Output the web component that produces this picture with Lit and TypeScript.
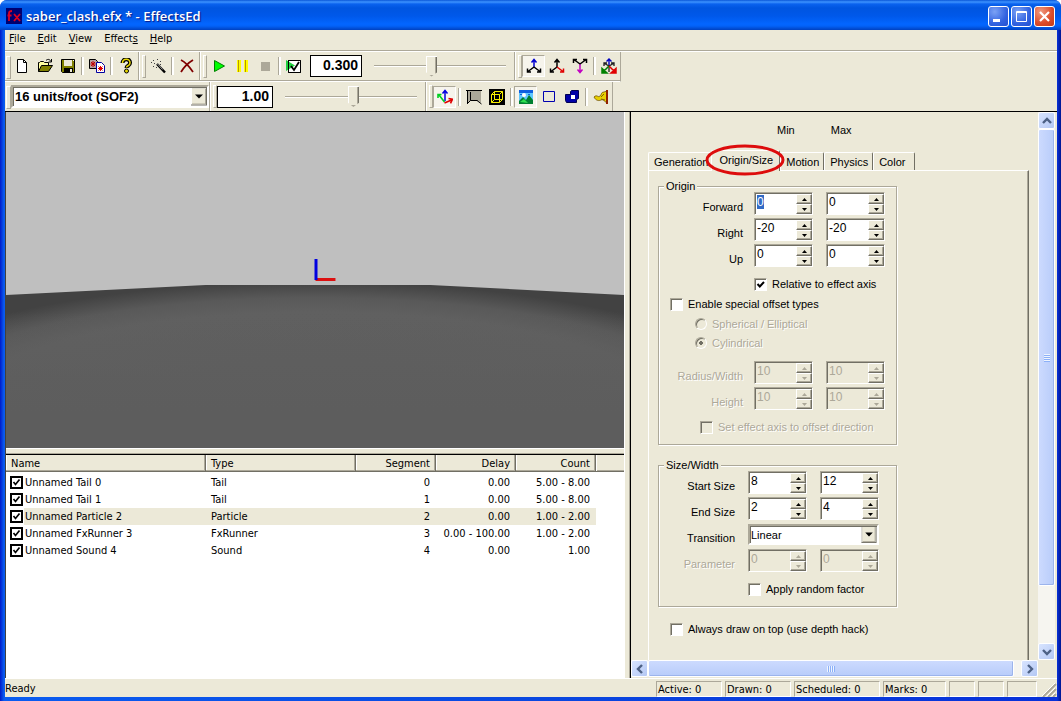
import { LitElement, html, css, svg, nothing } from "lit";
import { customElement, state } from "lit/decorators.js";

const icon = (body: unknown, cls = "ico") =>
  html`<svg class=${cls} viewBox="0 0 16 16" width="16" height="16" aria-hidden="true">${body}</svg>`;

const axisTripod = (up: string, left: string, right: string) => svg`
  <path d="M8 9V2M5.500 4.500 8 1.500l2.500 3" stroke=${up} fill="none" stroke-width="1.500"/>
  <path d="M8 9 2 13.500M1.500 10.500v3.500h3.500" stroke=${left} fill="none" stroke-width="1.500"/>
  <path d="M8 9l6 4.500M14.500 10.500v3.500h-3.500" stroke=${right} fill="none" stroke-width="1.500"/>`;

const ICONS: Record<string, unknown> = {
  new: svg`<path d="M3.500 1.500h6l3 3v10h-9z" fill="#fff" stroke="#000"/><path d="M9.500 1.500v3h3" fill="none" stroke="#000"/>`,
  open: svg`<path d="M1.500 13.500v-9h1l1-1h3l1 1h4v3" fill="#ffffa0" stroke="#000"/><path d="M1.500 13.500l3-6h11l-4 6z" fill="#808000" stroke="#000"/><path d="M9 2.500c2-2 4-1 5 1M14.500 1v3h-3" fill="none" stroke="#000"/>`,
  save: svg`<path d="M1.500 1.500h13v13h-12l-1-1z" fill="#808000" stroke="#000"/><path d="M4 2h8v6H4z" fill="#ece9d8"/><path d="M4 10h9v4H4z" fill="#000"/><path d="M10 11h2v3h-2z" fill="#ece9d8"/><path d="M13 2h1v1h-1z" fill="#fff"/>`,
  copy: svg`<path d="M.5 1.500h6l2 2v7h-8z" fill="#b8a0a0" stroke="#000"/><path d="M2 4l4 4M6 4L2 8M4 3v6M1.500 6h5" stroke="#c00000"/><path d="M7.500 4.500h5l3 3v7h-8z" fill="#fff" stroke="#0000a0"/><path d="M9.500 8.500l4 4M13.500 8.500l-4 4M11.500 8v5M9 10.500h5" stroke="#e00000"/>`,
  help: svg`<path d="M4.500 5c0-5 8-5 7.500 0 0 3-3.500 2.500-3.500 5" fill="none" stroke="#000" stroke-width="4"/><path d="M4.500 5c0-5 8-5 7.500 0 0 3-3.500 2.500-3.500 4.500" fill="none" stroke="#e8d800" stroke-width="1.500"/><circle cx="8.500" cy="13" r="2" fill="#e8d800" stroke="#000"/>`,
  wand: svg`<path d="M7 6l8 8.500" stroke="#000" stroke-width="2.400"/><path d="M7.500 6l5 5.500" stroke="#fff" stroke-width=".6"/><path d="M3 2h1v1H3zM7 1h1v1H7zM10 3h1v1h-1zM1 4h1v1H1zM4 5h1v1H4zM3 8h1v1H3zM6 9h1v1H6zM10 6h1v1h-1z" fill="#404040"/>`,
  del: svg`<path d="M2 2c4 2 8 6 12 12M14 2C9 5 5 9 2 14" fill="none" stroke="#800000" stroke-width="1.800"/>`,
  play: svg`<path d="M3.500 2.500v11l10-5.500z" fill="#00ff00" stroke="#008000"/>`,
  pause: svg`<path d="M3 2h4v12H3zM10 2h4v12h-4z" fill="#ffff00"/><path d="M4 2h1v12H4zM11 2h1v12h-1z" fill="#b89800"/>`,
  stop: svg`<path d="M4 4h9v9H4z" fill="#aca899"/>`,
  loop: svg`<path d="M2.500 2.500h12v12h-12z" fill="#fff" stroke="#000"/><path d="M0 2v11l9-5.500z" fill="#20d040"/><path d="M2.500 2v12.500h12V2.500h-12" fill="none" stroke="#000"/><path d="M5 8l3 4L13 4" fill="none" stroke="#000" stroke-width="1.800"/>`,
  axisZ: axisTripod("#0000d0", "#000", "#000"),
  axisX: axisTripod("#000", "#000", "#e00000"),
  axisY: svg`<path d="M8 6v8M5.500 11.500 8 14.500l2.500-3" stroke="#c000c0" fill="none" stroke-width="1.500"/><path d="M8 6 2.500 2M1.500 5V1.500H5M8 6l5.500-4M14.500 5V1.500H11" stroke="#000" fill="none" stroke-width="1.500"/>`,
  axisAll: svg`<path d="M8 9V2M5.500 3.500 8 1l2.500 2.500" stroke="#0000c0" fill="none" stroke-width="1.400"/><path d="M8 8 3.500 5.500M3 8V5h3M8 8l4.500-2.500M13 8V5h-3M8 8v6" stroke="#202020" fill="none" stroke-width="1.300"/><path d="M8 8l-5 5M1 10.500V15h5z" stroke="#008000" fill="#008000" stroke-width="1.500"/><path d="M8 8l5 5M15 10.500V15h-5z" stroke="#e00000" fill="#e00000" stroke-width="1.500"/>`,
  axes: svg`<path d="M8 12V2M5.500 4.500 8 1.500l2.500 3" stroke="#0000e0" fill="none" stroke-width="1.500"/><path d="M7.500 13 2 6M1 9V5.500h3.500" stroke="#00d020" fill="none" stroke-width="1.600"/><path d="M7.500 14l7-3M11.500 9.500l4 .8-2 4" stroke="#e00000" fill="none" stroke-width="1.600"/>`,
  ground: svg`<path d="M1 2h14v12l-4-3H5l-4 3z" fill="#aca899"/><path d="M0 1.500h16M1.500 1v13M4.500 3v8.500L1 15M11 11.500l4.500 3.500M4.500 11.500h7" stroke="#000" fill="none"/>`,
  cube: svg`<path d="M0 0h16v16H0z" fill="#000"/><path d="M2.500 5.500h8v8h-8zM5.500 2.500h8v8h-8zM2.500 5.500l3-3M10.500 5.500l3-3M2.500 13.500l3-3M10.500 13.500l3-3" fill="none" stroke="#f8f000"/>`,
  image: svg`<path d="M1 1h14v14H1z" fill="#60c8ff"/><path d="M1 1h14v3H1z" fill="#1060e0"/><path d="M2 5h2v1H2zM6 5h2v1H6zM10 5h2v1h-2z" fill="#1060e0"/><circle cx="6" cy="6" r="2" fill="#fff"/><path d="M1 12l4-4 3 3 3-5 4 5v4H1z" fill="#008030"/><path d="M2 13l4-3 4 4z" fill="#30e050"/>`,
  rect: svg`<path d="M2.500 2.500h11v10h-11z" fill="none" stroke="#0000b0"/>`,
  solid: svg`<path d="M6.500 2.500l1-1h7v8l-2 1v3h-10l-1-2v-6h5z" fill="#0000a8" stroke="#000050"/><path d="M7 6h4v4H7z" fill="#fff"/>`,
  flag: svg`<path d="M1 8c3-3 4 1 6-1 2-2 1-4 4-4l3-1v12c-3-2-4-4-6-3s-5 1-7-3z" fill="#e8d000" stroke="#604000" stroke-width=".7"/><path d="M13 1h2v14h-2z" fill="#902000"/><path d="M8 8l3-3M8 10l4 1" stroke="#806000"/>`,
};

const chevron = (d: string) =>
  html`<svg class="chev" viewBox="0 0 10 10" width="10" height="10" aria-hidden="true"><path d=${d} fill="none" stroke="#4d6185" stroke-width="2.400"/></svg>`;

interface Effect { name: string; type: string; segment: number; delay: string; count: string }

const EFFECTS: Effect[] = [
  { name: "Unnamed Tail 0", type: "Tail", segment: 0, delay: "0.00", count: "5.00 - 8.00" },
  { name: "Unnamed Tail 1", type: "Tail", segment: 1, delay: "0.00", count: "5.00 - 8.00" },
  { name: "Unnamed Particle 2", type: "Particle", segment: 2, delay: "0.00", count: "1.00 - 2.00" },
  { name: "Unnamed FxRunner 3", type: "FxRunner", segment: 3, delay: "0.00 - 100.00", count: "1.00 - 2.00" },
  { name: "Unnamed Sound 4", type: "Sound", segment: 4, delay: "0.00", count: "1.00" },
];

const MENUS: [string, string, string][] = [
  ["", "F", "ile"], ["", "E", "dit"], ["", "V", "iew"], ["Effect", "s", ""], ["", "H", "elp"],
];

@customElement("app-root")
export class AppRoot extends LitElement {
  @state() private selected = 2;
  @state() private tab = "Origin/Size";

  static styles = css`
    :host {
      display: block;
      height: 100vh;
      --face: #ece9d8;
      --shade: #aca899;
      --dark: #716f64;
      font: 11px/14px "DejaVu Sans Condensed", "Noto Sans", sans-serif;
      color: #000;
    }
    * { box-sizing: border-box; }
    button, input, select { font: inherit; color: inherit; margin: 0; border-radius: 0; outline: none; }
    button { padding: 0; border: 0; background: none; }
    .window {
      height: 100%;
      display: flex;
      flex-direction: column;
      background: linear-gradient(90deg, #0019c8, #0a5cf0 4px, #0a48e0 50%, #0831d9 calc(100% - 4px), #001590);
      padding: 0 4px 4px 5px;
      border-radius: 7px 7px 0 0;
      overflow: hidden;
    }
    .title {
      flex: none;
      height: 30px;
      margin: 0 -4px 0 -5px;
      padding: 2px 6px 0 6px;
      display: flex;
      align-items: center;
      gap: 4px;
      background: linear-gradient(#0a56d8 0, #3d93ff 2px, #0a62ee 4px, #0055e0 8px, #0058ea 16px, #0366ff 24px, #0362f8 26px, #0041c0 30px);
      color: #fff;
    }
    .title h1 {
      flex: 1;
      margin: 0;
      font: 600 13px/18px "Open Sans", "Noto Sans", sans-serif;
      text-shadow: 1px 1px 1px #0a1883;
    }
    .caps { display: flex; gap: 2px; }
    .cap {
      width: 21px;
      height: 21px;
      border: 1px solid #fff;
      border-radius: 3px;
      background: radial-gradient(circle at 30% 25%, #7ba2f5, #3263e0 60%, #2350d0);
      display: block;
    }
    .cap.close { background: radial-gradient(circle at 30% 25%, #f09a80, #dc4a28 60%, #c03c18); }
    .cap svg { display: block; }
    .menu {
      flex: none;
      height: 22px;
      display: flex;
      background: var(--face);
      border-bottom: 1px solid #fff;
      box-shadow: inset 0 -1px var(--shade);
      padding: 2px 0 0 4px;
      gap: 12px;
    }
    .menu button { height: 14px; line-height: 14px; }
    .bars { flex: none; background: var(--face); display: flex; flex-direction: column; align-items: flex-start; }
    .bar { display: flex; align-items: center; height: 29px; border-right: 1px solid var(--shade); }
    .bar.first { height: 30px; border-bottom: 1px solid #fff; box-shadow: inset 0 -1px var(--shade); padding-bottom: 1px; }
    .grip { width: 5px; height: 21px; flex: none; }
    .grip::before { content: ""; display: block; width: 3px; height: 21px; border: 1px solid; border-color: #fff var(--shade) var(--shade) #fff; margin-left: 1px; }
    .band { width: 9px; flex: none; align-self: stretch; display: flex; align-items: center; padding-left: 1px; }
    .band::before { content: ""; align-self: stretch; width: 2px; border-left: 1px solid var(--shade); background: #fff; margin-right: 2px; }
    .band::after { content: ""; width: 3px; height: 21px; border: 1px solid; border-color: #fff var(--shade) var(--shade) #fff; }
    .sep { width: 6px; flex: none; height: 18px; }
    .sep::before { content: ""; display: block; width: 2px; height: 18px; margin-left: 2px; border-left: 1px solid var(--shade); background: #fff; }
    .tool { width: 23px; height: 22px; flex: none; display: grid; place-items: center; }
    .tool.on { border: 1px solid; border-color: var(--shade) #fff #fff var(--shade); background: #f6f4ec; }
    .ico { display: block; }
    .num {
      height: 22px;
      border: 1px solid #000;
      background: #fff;
      text-align: right;
      padding: 0 3px 2px 0;
      font: bold 14px/18px "Liberation Sans", Arial, sans-serif;
    }
    .num.speed { width: 52px; margin-left: 5px; }
    .num.scale { width: 56px; }
    .slide { appearance: none; width: 132px; height: 22px; margin: 0 7px 0 12px; background: linear-gradient(var(--shade), var(--shade)) 0 10px / 100% 1px no-repeat, linear-gradient(#fff, #fff) 0 11px / 100% 1px no-repeat; }
    .slide::-webkit-slider-thumb {
      appearance: none;
      width: 11px;
      height: 21px;
      background: var(--face);
      box-shadow: inset 1px 1px #fff, inset -1px 0 var(--dark), inset -2px -2px var(--shade);
      clip-path: polygon(0 0, 100% 0, 100% 80%, 50% 100%, 0 80%);
    }
    .drop {
      appearance: none;
      border: 2px solid;
      border-color: var(--shade) #fff #fff var(--shade);
      box-shadow: inset 1px 1px var(--dark);
      padding: 0 18px 0 1px;
      background:
        url('data:image/svg+xml,<svg xmlns="http://www.w3.org/2000/svg" width="16" height="18" viewBox="0 0 16 18"><path d="M0 0h16v18H0z" fill="%23716f64"/><path d="M0 0h15v17H0z" fill="%23fff"/><path d="M1 1h14v16H1z" fill="%23aca899"/><path d="M1 1h13v15H1z" fill="%23ece9d8"/><path d="M4 7h8l-4 4z"/></svg>') right center / 16px 100% no-repeat,
        #fff;
    }
    .drop.units { width: 198px; height: 23px; margin: 0 -1px 0 1px; padding-left: 2px; font: bold 13px/18px "Liberation Sans", Arial, sans-serif; }
    .main {
      flex: 1;
      min-height: 0;
      display: grid;
      grid-template-columns: minmax(0, 1fr) 6px 427px;
      background: var(--face);
      border-top: 1px solid #000;
    }
    .left { display: grid; grid-template-rows: minmax(0, 3fr) 6px minmax(0, 2fr); min-width: 0; border-left: 1px solid #404040; }
    .view { display: block; width: 100%; height: 100%; min-height: 0; background: #bfbfbf; }
    .bar-v { border-left: 1px solid #fff; border-right: 1px solid var(--shade); }
    .bar-h { border-top: 1px solid #fff; border-bottom: 1px solid var(--shade); }
    .list { background: #fff; overflow: hidden; border-top: 1px solid #000; }
    table { border-collapse: separate; border-spacing: 0; table-layout: fixed; width: 100%; }
    .c-name { width: 200px; }
    .c-type { width: 150px; }
    .c-num { width: 80px; }
    th {
      height: 17px;
      padding: 0 5px;
      font-weight: normal;
      text-align: left;
      background: var(--face);
      border-right: 1px solid var(--dark);
      border-bottom: 1px solid var(--dark);
      box-shadow: inset -1px -1px var(--shade), inset 1px 0 #fff;
      line-height: 15px;
    }
    th:last-child { border-right: 0; box-shadow: inset 1px 0 #fff, inset 0 -1px var(--shade); }
    td { height: 17px; line-height: 15px; padding: 0 6px 0 5px; white-space: nowrap; }
    td.r, th.r { text-align: right; }
    tbody::before { content: ""; display: block; height: 2px; }
    .name { padding: 0 0 0 4px; }
    .name label { display: flex; align-items: center; height: 17px; }
    .name span { flex: 1; height: 17px; line-height: 17px; padding-left: 1px; margin-left: 1px; }
    .picked td:not(.name):not(:last-child), .picked .name span { background: var(--face); }
    .rowcheck {
      appearance: none;
      flex: none;
      width: 13px;
      height: 13px;
      border: 2px solid #000;
      background: #fff;
    }
    .rowcheck:checked { background: url('data:image/svg+xml,<svg xmlns="http://www.w3.org/2000/svg" viewBox="0 0 9 9"><path d="M1.500 4l2 2.500 4-5" fill="none" stroke="%23000" stroke-width="1.700"/></svg>') center / 9px 9px no-repeat #fff; }

    .right {
      display: grid;
      grid-template: minmax(0, 1fr) 18px / minmax(0, 1fr) 17px;
      border-left: 1px solid #000;
      padding-right: 2px;
      font: 11px/14px "Liberation Sans", Arial, sans-serif;
      min-height: 0;
    }
    .page { overflow: hidden; padding: 11px 9px 0 17px; display: flex; flex-direction: column; }
    .minmax { display: flex; gap: 36px; padding-left: 129px; }
    .tabs { flex: none; display: flex; align-items: flex-end; height: 20px; margin: 14px 0 -1px; position: relative; z-index: 1; }
    .tab {
      height: 18px;
      padding: 1px 4px 0 5px;
      border: 1px solid;
      border-color: #fff var(--dark) transparent #fff;
      border-bottom: 0;
      margin-bottom: 1px;
      min-width: 42px;
      text-align: left;
      border-radius: 2px 2px 0 0;
    }
    .tab.on { position: relative; height: 21px; margin: 0 0 0 -2px; padding: 0 6px 2px 7px; background: var(--face); }
    .ring { position: absolute; left: -7px; top: -7px; overflow: visible; z-index: 1; }
    .sheet {
      flex: 1;
      border: 1px solid #fff;
      border-right-color: var(--dark);
      border-bottom: 0;
      box-shadow: inset -1px 0 var(--shade);
      padding: 9px 0 0 9px;
    }
    fieldset {
      width: 239px;
      margin: 0 0 14px;
      min-width: 0;
      border: 1px solid var(--shade);
      box-shadow: 1px 1px #fff, inset 1px 1px #fff;
      padding: 0 0 7px;
    }
    legend { margin-left: 5px; padding: 0 2px; height: 12px; line-height: 12px; background: var(--face); }
    .row { display: grid; grid-template-columns: 82px 59px 59px; column-gap: 13px; height: 26px; }
    .row.size { grid-template-columns: 76px 59px 59px; }
    .row > .cap-l { text-align: right; padding-top: 8px; }
    .origin .cap-l { margin-right: -2px; }
    .row .drop { grid-column: 2 / 4; height: 21px; margin-top: 1px; }
    .off { color: var(--shade); text-shadow: 1px 1px #fff; }
    .spin { display: flex; height: 23px; border: 1px solid; border-color: var(--shade) #fff #fff var(--shade); background: #fff; box-shadow: inset 1px 1px var(--dark); padding: 1px 0 0 1px; }
    .spin input { width: 40px; height: 16px; min-width: 0; border: 0; padding: 0 0 0 1px; background: none; font-size: 12px; line-height: 16px; }
    .spin .sel { width: 8px; background: linear-gradient(#316ac5, #316ac5) 1px 1px / 7px 14px no-repeat; color: #fff; flex: none; }
    .spin.dis { background: var(--face); }
    .spin.dis input { color: var(--shade); }
    .updown { margin-left: auto; width: 16px; display: grid; grid-template-rows: 10px 10px; flex: none; }
    .updown button { display: grid; place-items: center; background: var(--face); border: 1px solid; border-color: #fff var(--dark) var(--dark) #fff; box-shadow: inset -1px -1px var(--shade); }
    .updown svg { display: block; }
    .opt { display: flex; align-items: center; gap: 5px; height: 20px; }
    .opt.radio { height: 19px; padding-left: 36px; }
    .shape { margin-bottom: 9px; }
    .gap { margin-top: 4px; }
    .in12 { padding-left: 11px; }
    .in42 { padding-left: 41px; }
    .in90 { padding-left: 89px; }
    .in96 { padding-left: 95px; }
    .opt input { appearance: none; flex: none; width: 13px; height: 13px; background: #fff; border: 1px solid; border-color: var(--shade) #fff #fff var(--shade); box-shadow: inset 1px 1px var(--dark); }
    .opt input:disabled { background: var(--face); }
    .opt input[type="checkbox"]:checked { background: url('data:image/svg+xml,<svg xmlns="http://www.w3.org/2000/svg" viewBox="0 0 11 11"><path d="M2.500 5l2.300 2.500L9 3" fill="none" stroke="%23000" stroke-width="2"/></svg>') center / 11px 11px no-repeat #fff; }
    .opt input[type="radio"] { width: 12px; height: 12px; border-radius: 50%; }
    .opt input[type="radio"]:checked { background: radial-gradient(circle, var(--dark) 2px, transparent 2px); }
    .last { margin-top: -2px; padding-left: 12px; }

    .sb { display: flex; background: #f6f5f0; }
    .sb.v { flex-direction: column; width: 17px; }
    .sb.h { height: 17px; }
    .sb button { flex: none; width: 17px; height: 17px; display: grid; place-items: center; border: 1px solid #fff; border-radius: 2px; background: linear-gradient(135deg, #d8e4ff, #b4c8f4); }
    .track { flex: 1; min-width: 0; min-height: 0; }
    .thumb { display: grid; place-items: center; border: 1px solid #fff; border-radius: 2px; box-shadow: inset -1px -1px #9cb4ec; background: linear-gradient(90deg, #ccdafe, #b8ccfa); }
    .h .thumb { height: 17px; width: 98%; background: linear-gradient(#ccdafe, #b8ccfa); }
    .v .thumb { width: 17px; height: 89%; }
    .ridge { width: 8px; height: 6px; background: repeating-linear-gradient(90deg, #eef4fe 0 1px, #8cb0f8 1px 2px); }
    .v .ridge { width: 6px; height: 8px; background: repeating-linear-gradient(#eef4fe 0 1px, #8cb0f8 1px 2px); }

    .status { flex: none; height: 19px; background: var(--face); border-top: 1px solid #fff; display: flex; gap: 3px; padding: 2px 0 0; }
    .status .ready { flex: 1; line-height: 16px; }
    .cell { height: 16px; border: 1px solid; border-color: var(--shade) #fff #fff var(--shade); padding-left: 1px; line-height: 15px; white-space: nowrap; }
    .w66 { width: 66px; } .w63 { width: 63px; } .w86 { width: 86px; } .w26 { width: 26px; } .w30 { width: 30px; }
    .sizer { width: 17px; height: 16px; }
  `;

  private tool(id: string, label: string, on = false) {
    return html`<button class=${on ? "tool on" : "tool"} aria-label=${label}>${icon(ICONS[id])}</button>`;
  }

  private spin(id: string, label: string, value: string, disabled = false, marked = false) {
    const fill = disabled ? "#aca899" : "#000";
    return html`<span class=${disabled ? "spin dis" : "spin"}>
      <input id=${id} class=${marked ? "sel" : ""} aria-label=${label} .value=${value} ?disabled=${disabled}>
      <span class="updown">
        <button aria-label="Increase" ?disabled=${disabled}><svg width="5" height="3"><path d="M0 3h5L2.500 0z" fill=${fill}/></svg></button>
        <button aria-label="Decrease" ?disabled=${disabled}><svg width="5" height="3"><path d="M0 0h5L2.500 3z" fill=${fill}/></svg></button>
      </span></span>`;
  }

  private pair(group: string, label: string, min: string, max: string, disabled = false, marked = false) {
    const id = label.toLowerCase().replace(/\W/g, "-");
    return html`<div class="row ${group}">
      <label class=${disabled ? "cap-l off" : "cap-l"} for="${id}-min">${label}</label>
      ${this.spin(`${id}-min`, `${label} minimum`, min, disabled, marked)}
      ${this.spin(`${id}-max`, `${label} maximum`, max, disabled)}
    </div>`;
  }

  private check(cls: string, label: string, checked = false, disabled = false) {
    return html`<label class="opt ${cls} ${disabled ? "off" : ""}"><input type="checkbox" ?checked=${checked} ?disabled=${disabled}>${label}</label>`;
  }

  private renderTitle() {
    return html`<header class="title">
      <svg width="16" height="16" viewBox="0 0 16 16" aria-hidden="true"><path d="M0 0h16v16H0z" fill="#000070"/><path d="M3 13V5q0-2 3-2M1.500 7.500h4M8 6l6 7M14 6l-6 7" fill="none" stroke="#e00020" stroke-width="1.800"/></svg>
      <h1>saber_clash.efx * - EffectsEd</h1>
      <div class="caps">
        <button class="cap" aria-label="Minimize"><svg width="19" height="19"><path d="M4 12h7v3H4z" fill="#fff"/></svg></button>
        <button class="cap" aria-label="Maximize"><svg width="19" height="19"><path d="M4.500 4.500h10v10h-10zM4 5.500h11" fill="none" stroke="#fff"/></svg></button>
        <button class="cap close" aria-label="Close"><svg width="19" height="19"><path d="M5 5l9 9M14 5l-9 9" stroke="#fff" stroke-width="2.200"/></svg></button>
      </div>
    </header>`;
  }

  private renderBars() {
    return html`<div class="bars">
      <div class="bar first">
        <i class="grip"></i>
        ${this.tool("new", "New")}${this.tool("open", "Open")}${this.tool("save", "Save")}
        <i class="sep"></i>${this.tool("copy", "Copy")}<i class="sep"></i>${this.tool("help", "Help")}
        <i class="band"></i>${this.tool("wand", "New effect")}<i class="sep"></i>${this.tool("del", "Delete")}
        <i class="band"></i>${this.tool("play", "Play")}${this.tool("pause", "Pause")}${this.tool("stop", "Stop")}
        <i class="sep"></i>${this.tool("loop", "Repeat")}
        <input class="num speed" aria-label="Repeat delay" value="0.300">
        <input class="slide" type="range" aria-label="Repeat delay slider" min="0" max="100" value="43">
        <i class="band"></i>${this.tool("axisZ", "Up axis", true)}${this.tool("axisX", "Right axis")}${this.tool("axisY", "Down axis")}
        <i class="sep"></i>${this.tool("axisAll", "All axes")}
      </div>
      <div class="bar">
        <i class="grip"></i>
        <select class="drop units" aria-label="Units"><option>16 units/foot (SOF2)</option></select>
        <i class="band"></i>
        <input class="num scale" aria-label="Time scale" value="1.00">
        <input class="slide" type="range" aria-label="Time scale slider" min="0" max="100" value="52">
        <i class="band"></i>${this.tool("axes", "Show axes", true)}
        <i class="sep"></i>${this.tool("ground", "Ground")}${this.tool("cube", "Bounding box")}
        <i class="sep"></i>${this.tool("image", "Textured", true)}${this.tool("rect", "Wireframe")}${this.tool("solid", "Solid")}
        <i class="sep"></i>${this.tool("flag", "Wind")}
      </div>
    </div>`;
  }

  private renderView() {
    return html`<svg class="view" viewBox="0 0 619 336" preserveAspectRatio="none" role="img" aria-label="Effect preview">
      <defs>
        <radialGradient id="glow" gradientUnits="userSpaceOnUse" cx="0" cy="0" r="1" gradientTransform="translate(309 300) scale(480 133)">
          <stop offset="0" stop-color="#5e5e5e"/><stop offset=".75" stop-color="#606060"/><stop offset=".86" stop-color="#595959"/><stop offset=".98" stop-color="#424242"/>
        </radialGradient>
        <linearGradient id="base" gradientUnits="userSpaceOnUse" x1="0" y1="200" x2="0" y2="300">
          <stop offset="0" stop-color="#5d5d5d" stop-opacity="0"/><stop offset="1" stop-color="#5d5d5d"/>
        </linearGradient>
      </defs>
      <path d="M0 183 200 173H425L619 183V336H0z" fill="url(#glow)"/>
      <path d="M0 200H619V336H0z" fill="url(#base)"/>
      <path d="M310 166h20v3h-20z" fill="#dc1010"/><path d="M309 147h3v21h-3z" fill="#0000e0"/>
    </svg>`;
  }

  private renderList() {
    return html`<div class="list"><table>
      <colgroup><col class="c-name"><col class="c-type"><col class="c-num"><col class="c-num"><col class="c-num"><col></colgroup>
      <thead><tr><th>Name</th><th>Type</th><th class="r">Segment</th><th class="r">Delay</th><th class="r">Count</th><th></th></tr></thead>
      <tbody>${EFFECTS.map((e, i) => html`<tr class=${i === this.selected ? "picked" : ""} @click=${() => { this.selected = i; }}>
        <td class="name"><label><input class="rowcheck" type="checkbox" checked><span>${e.name}</span></label></td>
        <td>${e.type}</td><td class="r">${e.segment}</td><td class="r">${e.delay}</td><td class="r">${e.count}</td><td></td>
      </tr>`)}</tbody>
    </table></div>`;
  }

  private renderPage() {
    return html`<section class="page">
      <div class="minmax"><span>Min</span><span>Max</span></div>
      <div class="tabs" role="tablist">
        ${["Generation", "Origin/Size", "Motion", "Physics", "Color"].map(t => html`<button role="tab" class=${t === this.tab ? "tab on" : "tab"} @click=${() => { this.tab = t; }}>${t}${t === "Origin/Size"
          ? html`<svg class="ring" width="80" height="32" aria-hidden="true"><ellipse cx="40" cy="16" rx="38" ry="14" fill="none" stroke="#dd0c0c" stroke-width="3"/></svg>` : nothing}</button>`)}
      </div>
      <div class="sheet">
        <fieldset>
          <legend>Origin</legend>
          ${this.pair("origin", "Forward", "0", "0", false, true)}
          ${this.pair("origin", "Right", "-20", "-20")}
          ${this.pair("origin", "Up", "0", "0")}
          ${this.check("in96 gap", "Relative to effect axis", true)}
          ${this.check("in12", "Enable special offset types")}
          <div class="shape">
            <label class="opt radio off"><input type="radio" name="shape" disabled>Spherical / Elliptical</label>
            <label class="opt radio off"><input type="radio" name="shape" checked disabled>Cylindrical</label>
          </div>
          ${this.pair("origin", "Radius/Width", "10", "10", true)}
          ${this.pair("origin", "Height", "10", "10", true)}
          ${this.check("in42 gap", "Set effect axis to offset direction", false, true)}
        </fieldset>
        <fieldset>
          <legend>Size/Width</legend>
          ${this.pair("size", "Start Size", "8", "12")}
          ${this.pair("size", "End Size", "2", "4")}
          <div class="row size"><label class="cap-l" for="transition">Transition</label>
            <select id="transition" class="drop"><option>Linear</option></select></div>
          ${this.pair("size", "Parameter", "0", "0", true)}
          ${this.check("in90 gap", "Apply random factor")}
        </fieldset>
        ${this.check("last", "Always draw on top (use depth hack)")}
      </div>
    </section>`;
  }

  render() {
    return html`<div class="window">
      ${this.renderTitle()}
      <nav class="menu">${MENUS.map(([a, u, b]) => html`<button>${a}<u>${u}</u>${b}</button>`)}</nav>
      ${this.renderBars()}
      <main class="main">
        <div class="left">${this.renderView()}<div class="bar-h"></div>${this.renderList()}</div>
        <div class="bar-v"></div>
        <div class="right">
          ${this.renderPage()}
          <div class="sb v">
            <button aria-label="Scroll up">${chevron("M1 7l4-4 4 4")}</button>
            <div class="track"><div class="thumb"><i class="ridge"></i></div></div>
            <button aria-label="Scroll down">${chevron("M1 3l4 4 4-4")}</button>
          </div>
          <div class="sb h">
            <button aria-label="Scroll left">${chevron("M7 1L3 5l4 4")}</button>
            <div class="track"><div class="thumb"><i class="ridge"></i></div></div>
            <button aria-label="Scroll right">${chevron("M3 1l4 4-4 4")}</button>
          </div>
        </div>
      </main>
      <footer class="status">
        <span class="ready">Ready</span>
        <span class="cell w66">Active: 0</span><span class="cell w66">Drawn: 0</span><span class="cell w86">Scheduled: 0</span><span class="cell w63">Marks: 0</span>
        <span class="cell w26"></span><span class="cell w26"></span><span class="cell w30"></span>
        <svg class="sizer" viewBox="0 0 17 16" aria-hidden="true"><path d="M3 16 16 3M8 16l8-8M13 16l3-3" stroke="#aca899" stroke-width="2"/><path d="M2 15 15 2M7 15l8-8M12 15l3-3" stroke="#fff"/></svg>
      </footer>
    </div>`;
  }
}
